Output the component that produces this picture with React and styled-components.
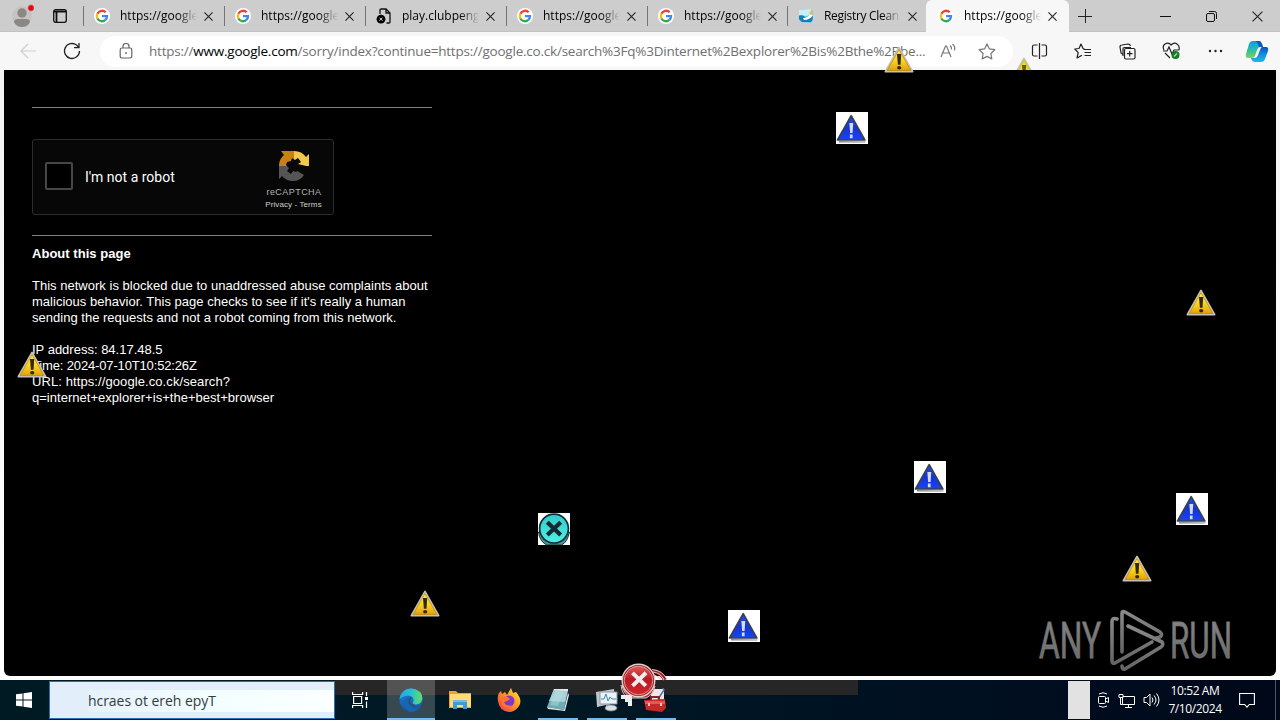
import React from "react";
import styled, { createGlobalStyle } from "styled-components";

const GlobalStyle = createGlobalStyle`
  * {
    box-sizing: border-box;
  }

  body {
    margin: 0;
    background: #000;
    overflow: hidden;
  }

  svg {
    display: block;
    flex: none;
  }
`

const Desktop = styled.div`
  position: relative;
  display: flex;
  flex-direction: column;
  width: 1280px;
  height: 720px;
  overflow: hidden;
  font-family: "Open Sans", "Noto Sans", sans-serif;
  color: #000;
`

/* ---------- browser ---------- */

const TabStrip = styled.div`
  display: flex;
  align-items: stretch;
  height: 32px;
  background: #cdcdcd;
  box-shadow: inset 0 -1px 0 #c2c2c2;
`

const Profile = styled.div`
  display: flex;
  align-items: center;
  gap: 19px;
  width: 83px;
  padding-left: 12px;
`

const Tab = styled.div`
  display: flex;
  flex: none;
  align-items: center;
  width: ${p => p.$width || 141}px;
  background: ${p => p.$active ? "#f7f7f7" : "none"};
  border-radius: ${p => p.$active ? "6px 6px 0 0" : 0};

  &::before {
    content: "";
    width: 1px;
    height: 20px;
    margin-right: ${p => p.$active ? 11 : 10}px;
    background: ${p => p.$active ? "none" : "#747474"};
  }
`

const TabTitle = styled.div`
  width: 77px;
  margin: 0 7px 1px 10px;
  overflow: hidden;
  white-space: nowrap;
  font-size: 12px;
  line-height: 18px;
  letter-spacing: ${p => p.$spacing || 0}px;
  mask-image: linear-gradient(90deg, #000 58px, transparent 77px);
`

const StripSpacer = styled.div`
  flex: 1;
`

const WindowButtons = styled.div`
  display: flex;
  align-items: center;
  gap: 35px;
  padding-right: 17px;
`

const NewTab = styled.div`
  display: flex;
  align-items: center;
  padding-left: 9px;
`

const Toolbar = styled.div`
  display: flex;
  align-items: center;
  height: 38px;
  padding-left: 19px;
  background: #f7f7f7;
`

const ReloadButton = styled.div`
  margin-left: 26px;
`

const Address = styled.div`
  display: flex;
  flex: none;
  align-items: center;
  width: 913px;
  height: 31px;
  margin: 0 4px 0 19px;
  padding-left: 19px;
  border-radius: 16px;
  background: #fff;
`

const Url = styled.div`
  width: 778px;
  margin: 0 13px 1px 16px;
  white-space: nowrap;
  font-size: 13.5px;
  line-height: 20px;
  letter-spacing: -0.225px;
  color: #707070;

  b {
    font-weight: 400;
    color: #000;
  }
`

const ReadAloud = styled.div`
  display: flex;
  width: 34px;
  margin-right: 4px;
`

const ToolIcons = styled.div`
  display: flex;
  align-items: center;
`

const ToolButton = styled.div`
  display: flex;
  justify-content: center;
  width: ${p => p.$last ? 40 : 44}px;
`

const PageFrame = styled.div`
  flex: none;
  height: 610px;
  padding: 0 4px 4px;
  background: linear-gradient(#f4f4f4, #fff);
`

const Page = styled.div`
  display: flex;
  justify-content: space-between;
  height: 606px;
  padding: 37px 28px 0;
  border-radius: 0 0 6px 6px;
  background: #000;
  color: #fff;
  font-family: "Liberation Sans", Arial, sans-serif;
`

const Article = styled.div`
  width: 400px;
  font-size: 13px;
  line-height: 16px;
`

const Rule = styled.div`
  height: 1px;
  background: #808080;
`

const Line = styled.div`
  white-space: nowrap;
  letter-spacing: ${p => p.$spacing || 0}px;
  font-weight: ${p => p.$bold ? 700 : 400};
`

const Gap = styled.div`
  height: ${p => p.$size || 16}px;
`

const Captcha = styled.div`
  display: flex;
  align-items: center;
  width: 302px;
  height: 76px;
  margin: 31px 0 20px;
  padding: 0 10px 0 12px;
  border: 1px solid #2b2b2b;
  border-radius: 3px;
  background: #070707;
  font-family: Roboto, "Liberation Sans", sans-serif;
`

const CheckBox = styled.div`
  width: 28px;
  height: 28px;
  margin-top: -3px;
  border: 2px solid #474747;
  border-radius: 2px;
  background: #000;
`

const CaptchaLabel = styled.div`
  flex: 1;
  padding-left: 12px;
  font-size: 14px;
`

const CaptchaBrand = styled.div`
  display: flex;
  flex-direction: column;
  align-items: center;
  width: 59px;
  margin-top: 5px;
  font-family: "Liberation Sans", Arial, sans-serif;
  color: #b4b4b4;
`

const BrandName = styled.div`
  margin-top: 3px;
  padding-left: 1px;
  font-size: 9px;
  line-height: 12px;
  letter-spacing: 0.45px;
  white-space: nowrap;
`

const BrandLinks = styled.div`
  font-size: 8px;
  line-height: 13px;
  letter-spacing: 0.1px;
  white-space: nowrap;
  color: #d0d0d0;
`

const Watermark = styled.div`
  align-self: flex-end;
  margin: 0 2px 4px 0;
`

/* ---------- taskbar ---------- */

const Taskbar = styled.div`
  display: flex;
  flex: none;
  height: 40px;
  background:
    linear-gradient(#262626, #262626) 335px 0 / 523px 15px no-repeat,
    linear-gradient(90deg, #001a24, #001824 45%, #000e20 80%, #000819);
`

const Start = styled.div`
  display: flex;
  align-items: center;
  width: 49px;
  padding-left: 16px;
`

const SearchBox = styled.div`
  display: flex;
  align-items: center;
  width: 286px;
  height: 38px;
  margin-top: 1px;
  padding-left: 38px;
  border: 1px solid #286fb0;
  background:
    linear-gradient(90deg, #e6f1fc, #f2feff 45%, #fbffff) 38px 8px / 246px 22px no-repeat,
    #e2effb;
  font-size: 14px;
  letter-spacing: -0.05px;
  color: #333b40;
  white-space: nowrap;
`

const TaskButton = styled.div`
  display: flex;
  align-items: center;
  justify-content: center;
  width: ${p => p.$width || 49}px;
  height: 40px;
  background:
    linear-gradient(#76b9ed, #76b9ed) 50% 100% / ${p => p.$wide ? 48 : 40}px ${p => p.$running ? 2 : 0}px no-repeat,
    ${p => p.$active ? "linear-gradient(#535353 15px, #364951 15px)" : "none"};
`

const TaskView = styled.div`
  margin-right: 2px;
`

const Tray = styled.div`
  display: flex;
  align-items: center;
  margin-left: auto;
  color: #fff;
`

const TrayBlock = styled.div`
  width: 22px;
  height: 38px;
  margin-right: 7px;
  background: #e2e2e2;
`

const TrayIcons = styled.div`
  display: flex;
  align-items: center;
  gap: 8px;
`

const Clock = styled.div`
  width: 68px;
  margin: 0 10px 0 1px;
  text-align: center;
  font-size: 12px;
  line-height: 18px;
  letter-spacing: -0.4px;
  white-space: nowrap;
`

const ShowDesktop = styled.div`
  width: 5px;
  height: 40px;
  margin-left: 20px;
  border-left: 1px solid #4b5565;
`

/* stray icons drawn over everything */
const Stray = styled.div`
  position: absolute;
  left: ${p => p.$x}px;
  top: ${p => p.$y}px;
  height: ${p => p.$clip ? p.$clip + "px" : "auto"};
  overflow: hidden;
`

const GoogleIcon = () => (
  <svg width="16" height="16" viewBox="0 0 16 16">
    <circle cx="8" cy="8" r="8" fill="#fff" />
    <g fill="none" strokeWidth="2.3">
      <path d="M11.7 4.3A5.100 5.100 0 0 0 3.400 5.700" stroke="#ea4335" />
      <path d="M3.400 5.700a5.100 5.100 0 0 0 0 4.700" stroke="#fbbc05" />
      <path d="M3.400 10.400a5.100 5.100 0 0 0 8 1.500" stroke="#34a853" />
      <path d="M8 8.200h5a5.100 5.100 0 0 1-1.600 3.700" stroke="#4285f4" />
    </g>
  </svg>
)

const BrokenPageIcon = () => (
  <svg width="16" height="16" viewBox="0 0 16 16" fill="none" stroke="#111" strokeWidth="1.3">
    <path d="M4 6V2.200Q4 1 5.200 1H10l4 4v9q0 1-1 1h-2.500M10 1v4h4" />
    <circle cx="5" cy="11.2" r="4.4" fill="#000" stroke="none" />
    <path d="m3.500 9.700 3 3m0-3-3 3" stroke="#ddd" strokeWidth="1" />
  </svg>
)

const RegistryIcon = () => (
  <svg width="16" height="16" viewBox="0 0 16 16">
    <path d="M1 2 13 1l2 2v9l-2 3-10-1-2-2z" fill="#69c5e5" />
    <path d="M1 2 13 1l1 4-5 3-8-1z" fill="#c9eef7" />
    <path d="M1 8q3-2 6 1t8-1q0 4-2 6H4l-3-3z" fill="#137fba" />
    <path d="M5 10q5 0 7-4l3 1q-3 5-9 5z" fill="#fff" />
    <path d="m11 5 3-3 1 3-2 2z" fill="#f4b94a" />
  </svg>
)

const CloseIcon = ({ size = 9, weight = 1.2 }) => (
  <svg width={size} height={size} viewBox="0 0 10 10" stroke="#222" strokeWidth={weight}>
    <path d="m.5.5 9 9m0-9-9 9" />
  </svg>
)

const Warning = ({ bright }) => (
  <svg width="30" height="27" viewBox="0 0 30 27">
    <defs>
      <linearGradient id="warn" x2="0" y2="1">
        <stop offset="0" stopColor="#fff04a" />
        <stop offset=".55" stopColor="#f9d51e" />
        <stop offset="1" stopColor="#e09b0b" />
      </linearGradient>
    </defs>
    <path d="M15 1.4 28.7 25.6H1.3z" fill={bright ? "#e9e31c" : "url(#warn)"} stroke="#c5c0ba" strokeWidth="1.7" strokeLinejoin="round" />
    <path d="M15 3.6 26.8 24.4H3.2z" fill="none" stroke={bright ? "#c8c014" : "#b9860a"} strokeWidth=".7" />
    <path d="M13 8h4.200l-.7 10.800h-2.600z" fill={bright ? "#6b5d10" : "#33270b"} />
    <ellipse cx="15.2" cy="21.8" rx="2.1" ry="1.800" fill="#33270b" />
  </svg>
)

const BlueAlert = () => (
  <svg width="32" height="32" viewBox="0 0 32 32">
    <defs>
      <linearGradient id="blue" x2="0" y2="1">
        <stop offset="0" stopColor="#2450f2" />
        <stop offset=".5" stopColor="#1833d6" />
        <stop offset="1" stopColor="#1644f5" />
      </linearGradient>
    </defs>
    <path d="M0 0h32v32H0z" fill="#fff" />
    <path d="m3 29 26.500.4L31 28l-2 2.500H3z" fill="#8c8c8c" />
    <path d="M15.200 3.700 28.800 28H1.500z" fill="url(#blue)" stroke="#38404c" strokeWidth="1.7" strokeLinejoin="round" />
    <path d="M13.400 11h3.800l-.6 10h-2.500zM13.900 22.500h2.700v3.700h-2.700z" fill="#d5dcfa" />
  </svg>
)

const TealCross = () => (
  <svg width="32" height="32" viewBox="0 0 32 32">
    <defs>
      <linearGradient id="teal" x2="0" y2="1">
        <stop offset="0" stopColor="#31cbc9" />
        <stop offset="1" stopColor="#51eee6" />
      </linearGradient>
    </defs>
    <path d="M0 0h32v32H0z" fill="#fff" />
    <path d="M.5 19q1 9 8 13h15q6-3 8-13z" fill="#4b9c9b" stroke="#152f32" />
    <circle cx="16" cy="15.600" r="14.400" fill="url(#teal)" stroke="#102f35" strokeWidth="1.7" />
    <path d="m9.300 9.200 13.400 12.800m0-12.800L9.300 22" stroke="#172a32" strokeWidth="4.200" />
  </svg>
)

const RedCross = () => (
  <svg width="50" height="43" viewBox="0 0 50 43">
    <defs>
      <linearGradient id="red" x2="0" y2="1">
        <stop offset="0" stopColor="#df5b57" />
        <stop offset=".45" stopColor="#b91b22" />
        <stop offset="1" stopColor="#d3262c" />
      </linearGradient>
    </defs>
    <g fill="none" stroke="#dfc2c2">
      <path d="M33 8q8 1 12 9" stroke="#9c2529" strokeWidth="4" />
      <path d="M32 6.500q11 1 15 10M33 9q8 1 11 8M34 12q5 1 7 5" />
      <path d="M2 22q2 10 10 13h14q7-3 9-12" fill="#b82b2f" />
      <path d="M1 22q1 10 8 14" />
    </g>
    <path d="M1 32v4h4v3h3v4h4V32z" fill="#eee" />
    <circle cx="18.500" cy="17.500" r="16.300" fill="#a31c20" stroke="#e2cfcf" strokeWidth="1.4" />
    <circle cx="18.500" cy="17.500" r="14.300" fill="url(#red)" stroke="#dcbaba" strokeWidth=".8" />
    <path d="m12.500 9.800 13.300 13.100M26 9.800 12.500 22.900" stroke="#eeeded" strokeWidth="4" />
  </svg>
)

const RecaptchaLogo = () => (
  <svg width="34" height="34" viewBox="0 0 34 34">
    <path d="M2 17q0-7 5-11L4 2h13v15z" fill="#c58210" />
    <path d="M17 2q8 0 12 6l3-3v12H17z" fill="#f1c750" />
    <path d="M2 17h15l3 5 7 4q-4 6-11 6-7 0-11-5l-3 3z" fill="#555" />
    <path d="m10 13 4-1 1-3 3 2 3-2 3 4-3 2 8 2-8 1 1 2-3 3-3-1-2 3-4-3 2-3-3-3z" fill="#080808" />
  </svg>
)

const WATERMARK_TEXT = {
  y: 49.5,
  fontFamily: "Roboto, sans-serif",
  fontSize: 50,
  textLength: 62,
  lengthAdjust: "spacingAndGlyphs",
  fill: "url(#mark)",
  stroke: "#777",
  strokeWidth: 0.8,
}

const AnyRunLogo = () => (
  <svg width="212" height="64" viewBox="0 0 212 64">
    <defs>
      <linearGradient id="mark" x2="0" y2="1">
        <stop offset="0" stopColor="#898989" />
        <stop offset="1" stopColor="#656565" />
      </linearGradient>
    </defs>
    <text x="5" {...WATERMARK_TEXT}>ANY</text>
    <text x="136" {...WATERMARK_TEXT}>RUN</text>
    <g fill="none" stroke="url(#mark)" strokeWidth="3.6" strokeLinejoin="round" strokeLinecap="round">
      <path d="M88 44V5.500q0-3 3-1.500l35 20q3 3 0 5l-4 1" />
      <path d="M83 11q-5-2-5 3v39q0 3 3 2l37-21" />
      <path d="m94 18 34 16q2 3-1 5L91 61q-3 1-3-3" />
    </g>
  </svg>
)

const LINES = [
  ["This network is blocked due to unaddressed abuse complaints about", 0.015],
  ["malicious behavior. This page checks to see if it's really a human", 0.02],
  ["sending the requests and not a robot coming from this network.", 0.015],
  null,
  ["IP address: 84.17.48.5", 0],
  ["Time: 2024-07-10T10:52:26Z", -0.15],
  ["URL: https://google.co.ck/search?", 0.09],
  ["q=internet+explorer+is+the+best+browser", 0.02],
]

const TABS = [
  { icon: GoogleIcon, title: "https://google" },
  { icon: GoogleIcon, title: "https://google" },
  { icon: BrokenPageIcon, title: "play.clubpeng" },
  { icon: GoogleIcon, title: "https://google" },
  { icon: GoogleIcon, title: "https://google", width: 140 },
  { icon: RegistryIcon, title: "Registry Clean", width: 139, spacing: -0.3 },
  { icon: GoogleIcon, title: "https://google", width: 143, active: true },
]

const WARNINGS = [[884, 46], [1186, 289], [17, 351], [1122, 555], [410, 590]]
const ALERTS = [[836, 112], [914, 461], [1176, 493], [728, 610]]

function Browser() {
  return <>
    <TabStrip>
      <Profile>
        <svg width="22" height="24" viewBox="0 0 22 24">
          <circle cx="10" cy="12" r="10" fill="#c6c3c1" />
          <circle cx="10" cy="9" r="4.7" fill="#8b8784" />
          <path d="M2 18q0-3 4-3h8q4 0 4 3-2 5-8 5t-8-5" fill="#8b8784" />
          <circle cx="19" cy="4" r="3.4" fill="#d90b18" stroke="#e1d1d1" strokeWidth=".8" />
        </svg>
        <svg width="14" height="14" viewBox="0 0 14 14" fill="none" stroke="#111" strokeWidth="1.3">
          <rect x=".7" y=".7" width="12.6" height="12.6" rx="2" />
          <path d="M1 2.500h12M3.500 3v10" strokeWidth="1.8" />
        </svg>
      </Profile>
      {TABS.map((tab, id) => (
        <Tab key={id} $active={tab.active} $width={tab.width}>
          <tab.icon />
          <TabTitle $spacing={tab.spacing}>{tab.title}</TabTitle>
          <CloseIcon />
        </Tab>
      ))}
      <NewTab>
        <svg width="14" height="14" viewBox="0 0 14 14" stroke="#222"><path d="M7.500 0v14M0 7.500h14" /></svg>
      </NewTab>
      <StripSpacer />
      <WindowButtons>
        <svg width="11" height="10" viewBox="0 0 11 10" stroke="#111"><path d="M0 5.500h11" /></svg>
        <svg width="11" height="11" viewBox="0 0 11 11" fill="none" stroke="#111">
          <rect x=".5" y="2.500" width="8" height="8" rx="1.500" />
          <path d="M3 .5h5.500q2 0 2 2V8" />
        </svg>
        <CloseIcon size={11} weight={1} />
      </WindowButtons>
    </TabStrip>

    <Toolbar>
      <svg width="18" height="16" viewBox="0 0 18 16" fill="none" stroke="#cecece" strokeWidth="1.2"><path d="M17 8H2m7-7L2 8l7 7" /></svg>
      <ReloadButton>
        <svg width="18" height="18" viewBox="0 0 18 18" fill="none" stroke="#222" strokeWidth="1.3">
          <path d="M16.500 9A7.500 7.500 0 1 1 13.500 3L16 5.500M16 1v4.700h-5" />
        </svg>
      </ReloadButton>
      <Address>
        <svg width="14" height="16" viewBox="0 0 14 16" fill="none" stroke="#666" strokeWidth="1.2">
          <rect x="1.200" y="5" width="11.600" height="10" rx="1.700" />
          <path d="M4 5V3.500a3 3 0 0 1 6 0V5" />
          <circle cx="7" cy="10" r=".9" fill="#666" stroke="none" />
        </svg>
        <Url>https://<b>www.google.com</b>/sorry/index?continue=https://google.co.ck/search%3Fq%3Dinternet%2Bexplorer%2Bis%2Bthe%2Bbe...</Url>
        <ReadAloud>
          <svg width="17" height="16" viewBox="0 0 17 16" fill="none" stroke="#777" strokeWidth="1.2">
            <path d="M1 14 5.500 3h1L11 14M3 10h6M10 2.500q2 1.500 1.500 4M12.500 1q3 2.500 2 6.500" />
          </svg>
        </ReadAloud>
        <svg width="18" height="17" viewBox="0 0 18 17" fill="none" stroke="#777" strokeWidth="1.2" strokeLinejoin="round">
          <path d="m9 1 2.400 4.900 5.400.8-3.900 3.800.9 5.400L9 13.400l-4.800 2.500.9-5.400-3.900-3.800 5.400-.8z" />
        </svg>
      </Address>
      <ToolIcons>
        <ToolButton>
          <svg width="17" height="16" viewBox="0 0 17 16" fill="none" stroke="#222" strokeWidth="1.2">
            <path d="M6.500 2H3Q1.500 2 1.500 3.500v8Q1.500 13 3 13h3.500M8.500 0v16M10.500 2H14q1.500 0 1.500 1.500v8Q15.500 13 14 13h-3.500" />
          </svg>
        </ToolButton>
        <ToolButton>
          <svg width="18" height="17" viewBox="0 0 18 17" fill="none" stroke="#222" strokeWidth="1.2" strokeLinejoin="round">
            <path d="M10.500 6 9 5.500 7 1 5 5.500.8 6l3.400 3.700L3 15l5-2.800M9.500 6.500H17M10.500 9.500H17M10.500 12.500H17" />
          </svg>
        </ToolButton>
        <ToolButton>
          <svg width="17" height="17" viewBox="0 0 17 17" fill="none" stroke="#222" strokeWidth="1.2">
            <path d="M4 11.500 2 10 1 4q0-2 2-2l6-1q2 0 2.500 2M4 13V6q0-1.500 1.500-1.500H12" />
            <rect x="5.500" y="5.500" width="10.500" height="10.500" rx="1.500" />
            <path d="M10.700 8v5.500M8 10.700h5.500" />
          </svg>
        </ToolButton>
        <ToolButton>
          <svg width="19" height="18" viewBox="0 0 19 18" fill="none" stroke="#222" strokeWidth="1.2">
            <path d="M2 8Q0 4 3 2q4-2 6 1 3-3 6-1t2 6M1 9h4l2-4 3 7 2-4h5M3 11l5 5" />
            <circle cx="13.500" cy="13" r="4" fill="#137c24" stroke="none" />
            <path d="m12 14.500 3-3" stroke="#b8d7ba" />
          </svg>
        </ToolButton>
        <ToolButton>
          <svg width="15" height="4" viewBox="0 0 15 4" fill="#222"><circle cx="2" cy="2" r="1.2" /><circle cx="7.5" cy="2" r="1.2" /><circle cx="13" cy="2" r="1.2" /></svg>
        </ToolButton>
        <ToolButton $last>
          <svg width="24" height="23" viewBox="0 0 24 23">
            <defs>
              <linearGradient id="cop1" x2="0" y2="1"><stop stopColor="#149cdd" /><stop offset=".6" stopColor="#2fc3a0" /><stop offset="1" stopColor="#8bd054" /></linearGradient>
              <linearGradient id="cop2" x2="0" y2="1"><stop stopColor="#0b4fb6" /><stop offset=".5" stopColor="#168ee1" /><stop offset="1" stopColor="#22b6e8" /></linearGradient>
            </defs>
            <path d="M8 1h6q2 0 3 3l1 3h-3q-2 0-3 3l-2 6q-1 2-3 2H3q-3 0-2-4L4 4q1-3 4-3" fill="url(#cop1)" />
            <path d="M10 1h4q2 0 3 3l1 3h-4q-1-5-4-6" fill="#0b58ba" />
            <path d="M17 7h4q3 0 2 4l-3 8q-1 3-4 3h-6q-3 0-4-4h4q2 0 3-3l2-5q1-3 2-3" fill="url(#cop2)" />
          </svg>
        </ToolButton>
      </ToolIcons>
    </Toolbar>

    <PageFrame>
      <Page>
        <Article>
          <Rule />
          <Captcha>
            <CheckBox />
            <CaptchaLabel>I'm not a robot</CaptchaLabel>
            <CaptchaBrand>
              <RecaptchaLogo />
              <BrandName>reCAPTCHA</BrandName>
              <BrandLinks>Privacy - Terms</BrandLinks>
            </CaptchaBrand>
          </Captcha>
          <Rule />
          <Gap $size={10} />
          <Line $bold $spacing={0.03}>About this page</Line>
          <Gap />
          {LINES.map((line, id) => line
            ? <Line key={id} $spacing={line[1]}>{line[0]}</Line>
            : <Gap key={id} />
          )}
        </Article>
        <Watermark><AnyRunLogo /></Watermark>
      </Page>
    </PageFrame>
  </>
}

const MonitorIcon = () => (
  <svg width="24" height="24" viewBox="0 0 24 24">
    <path d="m1 4 18-3 1 14-18 4z" fill="#bfc7cc" />
    <path d="M5 4h17v12H5z" fill="#edf3f7" stroke="#8995a0" />
    <path d="M6 11h3l2-5 2 7 2-4 2 2h4" fill="none" stroke="#378bc0" />
    <path d="M11 16h4v4h-4z" fill="#9ca3a8" />
    <ellipse cx="16" cy="20" rx="6" ry="3" fill="#d9dfe2" stroke="#79828a" strokeWidth=".7" />
  </svg>
)

function Tasks() {
  return <Taskbar>
    <Start>
      <svg width="16" height="16" viewBox="0 0 16 16" fill="#fff">
        <path d="m0 2.300 6.500-.9v6.100H0zM7.500 1.200 16 0v7.500H7.500zM0 8.500h6.500v6.100L0 13.700zM7.500 8.500H16V16l-8.500-1.200z" />
      </svg>
    </Start>
    <SearchBox>hcraes ot ereh epyT</SearchBox>
    <TaskButton $width={52}>
      <TaskView>
        <svg width="17" height="16" viewBox="0 0 17 16" fill="none" stroke="#fff" strokeWidth="1.2">
          <path d="M.6 0v2.500h10V0M.6 16v-2.500h10V16M1.600 4.500h8v7h-8zM14.500 0v4M14.500 9.500V16" />
          <path d="M13 5h3v3h-3z" fill="#fff" stroke="none" />
        </svg>
      </TaskView>
    </TaskButton>
    <TaskButton $width={48} $active $wide $running>
      <svg width="24" height="24" viewBox="0 0 24 24">
        <defs>
          <linearGradient id="edge1"><stop stopColor="#28a7e5" /><stop offset=".5" stopColor="#25c3ce" /><stop offset="1" stopColor="#67dc65" /></linearGradient>
          <linearGradient id="edge2" x2="0" y2="1"><stop stopColor="#2489dc" /><stop offset="1" stopColor="#1352a3" /></linearGradient>
        </defs>
        <circle cx="12" cy="12" r="11.5" fill="url(#edge2)" />
        <path d="M.6 11Q2 1 12 .5q11 1 11.400 10-1 6-7 6-4-1-2-3 1-3-2-5-5-3-11.800 2.500" fill="url(#edge1)" />
        <path d="M13 9q-6 3-2 9 5 4 10 1-4 6-11 4.500Q3 19 5 13q2-5 8-4" fill="#1765b3" />
        <path d="M13 9.500q-4 4 0 7 4 3 9 .5-5 3-9 1-6-3-2-8z" fill="#384b52" />
      </svg>
    </TaskButton>
    <TaskButton>
      <svg width="22" height="20" viewBox="0 0 22 20">
        <path d="M0 1h7l2 2h13v15H0z" fill="#e9a62c" />
        <path d="M1 4h21v13H1z" fill="#ffdc73" />
        <path d="M4 11h14v8h-4v-4H8v4H4z" fill="#3f9bd6" />
        <path d="M4 10h14v2H4z" fill="#73bde4" />
      </svg>
    </TaskButton>
    <TaskButton>
      <svg width="24" height="24" viewBox="0 0 24 24">
        <defs><linearGradient id="fox" x1="1" x2="0" y2="1"><stop stopColor="#ffea3b" /><stop offset=".45" stopColor="#ff9a22" /><stop offset="1" stopColor="#ef285d" /></linearGradient></defs>
        <path d="M2 5 4 3l1 3 3-2 2 3 4-7 2 5 3-1q7 8 3 14-4 6-10 6Q2 23 1 13q-1-5 1-8" fill="url(#fox)" />
        <circle cx="12" cy="13" r="5.5" fill="#8237c6" />
        <path d="M5 9q5-2 8 2l-3 2-3 1q2 5 8 3-5 5-10 0z" fill="#ff7726" />
      </svg>
    </TaskButton>
    <TaskButton $running>
      <svg width="24" height="24" viewBox="0 0 24 24">
        <path d="m8 1 14 1-4 20L1 19z" fill="#6bacb9" />
        <path d="m8 1 14 1-3 12-16-1z" fill="#a5d2d8" />
        <path d="M8 1h14v2L8 2zM1 19l17 3 4-17 1 2-4 16-17-2z" fill="#e8e9e8" />
        <path d="m10 3-6 14 8 1 6-14z" fill="#bfdee1" opacity=".45" />
      </svg>
    </TaskButton>
    <TaskButton $running><MonitorIcon /></TaskButton>
    <TaskButton $running>
      <svg width="24" height="24" viewBox="0 0 24 24">
        <path d="M7 1h13v14H7z" fill="#ece7eb" />
        <path d="m19 0 1 2-6 9" fill="none" stroke="#5869a4" strokeWidth="1.5" />
        <path d="M7 12V9h8v3" fill="none" stroke="#85272a" strokeWidth="2" />
        <path d="m0 12 21-1 1 9-4 4-16-2z" fill="#c42828" />
        <path d="M1 13h20v3H1z" fill="#e15b50" />
        <path d="M4 15h2v3H4zM16 15h2v3h-2z" fill="#e4d2b6" />
      </svg>
    </TaskButton>
    <Tray>
      <TrayBlock />
      <TrayIcons>
        <svg width="13" height="16" viewBox="0 0 13 16" fill="none" stroke="#fff">
          <rect x="1.500" y="4.500" width="7" height="7" rx="1" /><path d="m8.500 7 3-1.500v5L8.500 9M2 2q4-2.500 8 0M2 14q4 2.500 8 0" />
        </svg>
        <svg width="17" height="15" viewBox="0 0 17 15" fill="none" stroke="#fff">
          <path d="M4.500 3.500h12v8h-12zM10.500 12v2.500M7 14.500h7M2.500 5v6.500h2" /><path d="M1 1.500h4v3H1z" fill="#001020" />
        </svg>
        <svg width="17" height="16" viewBox="0 0 17 16" fill="none" stroke="#fff">
          <path d="M1 5.500h2.500L7 2v12l-3.500-3.500H1zM9 5.500q2 2.500 0 5M11 3.500q4 4.500 0 9M13.500 1.500q5 6.500 0 13" />
        </svg>
      </TrayIcons>
      <Clock>10:52 AM<br />7/10/2024</Clock>
      <svg width="16" height="17" viewBox="0 0 16 17" fill="none" stroke="#fff" strokeWidth="1.1"><path d="M.6 1.500h14.800v11h-5L8 15.200l-2.400-2.700h-5z" /></svg>
      <ShowDesktop />
    </Tray>
  </Taskbar>
}

export default function App() {
  return <Desktop>
    <GlobalStyle />
    <Browser />
    <Tasks />
    {WARNINGS.map(([x, y]) => <Stray key={x} $x={x} $y={y}><Warning /></Stray>)}
    <Stray $x={1009} $y={57} $clip={13}><Warning bright /></Stray>
    {ALERTS.map(([x, y]) => <Stray key={x} $x={x} $y={y}><BlueAlert /></Stray>)}
    <Stray $x={538} $y={513}><TealCross /></Stray>
    <Stray $x={620} $y={663}><RedCross /></Stray>
  </Desktop>
}
